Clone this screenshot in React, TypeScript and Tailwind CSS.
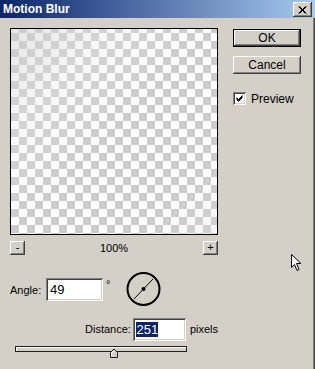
import React from "react";

const raised =
  "shadow-[inset_-1px_-1px_#404040,inset_1px_1px_#ffffff,inset_-2px_-2px_#808080,inset_2px_2px_#d4d0c8]";
const sunken =
  "shadow-[inset_1px_1px_#808080,inset_-1px_-1px_#ffffff,inset_2px_2px_#404040,inset_-2px_-2px_#d4d0c8]";

export default function App() {
  return (
    <div
      className="relative w-[315px] h-[369px] bg-[#d4d0c8] overflow-hidden text-black text-[11px] shadow-[inset_-1px_0_#404040,inset_-2px_0_#808080]"
      style={{ fontFamily: '"Liberation Sans", Arial, sans-serif' }}
    >
      {/* Title bar */}
      <div className="flex items-center justify-between h-[18px] pl-[3px] pr-[3px] bg-[linear-gradient(to_right,#0a246a,#a6caf0)]">
        <span className="text-white font-bold text-[12px] leading-none">Motion Blur</span>
        <div className={`w-[19px] h-[15px] mt-[1px] bg-[#d4d0c8] flex items-center justify-center ${raised}`}>
          <svg width="9" height="8" viewBox="0 0 9 8">
            <path d="M0.5 0.5 L7.5 7.5 M1.5 0.5 L8.5 7.5 M7.5 0.5 L0.5 7.5 M8.5 0.5 L1.5 7.5" stroke="#000" strokeWidth="1" />
          </svg>
        </div>
      </div>

      <div className="flex pl-[10px] pt-[10px]">
        {/* Left column */}
        <div className="w-[208px] flex flex-col">
          <div className="relative h-[207px] border border-black bg-[repeating-conic-gradient(#cccccc_0%_25%,#ffffff_0%_50%)] bg-[length:16px_16px] bg-[position:0px_-4px]">
            <div className="absolute inset-0 bg-[linear-gradient(135deg,rgba(205,205,205,0.5)_0%,rgba(230,230,230,0.3)_25%,rgba(255,255,255,0)_50%,rgba(255,255,255,0)_80%,rgba(220,220,220,0.3)_100%)]" />
          </div>
          <div className="flex items-center justify-between mt-[6px] h-[14px]">
            <div className={`w-[15px] h-[14px] flex items-center justify-center ${raised}`}>
              <span className="leading-none mb-[2px]">-</span>
            </div>
            <span className="leading-none">100%</span>
            <div className={`w-[15px] h-[14px] flex items-center justify-center ${raised}`}>
              <span className="leading-none mb-[1px]">+</span>
            </div>
          </div>

          {/* Angle row */}
          <div className="flex items-center mt-[18px] h-[32px]">
            <span className="text-[11px] w-[36px] mt-[3px]">Angle:</span>
            <div className={`w-[57px] h-[23px] bg-white flex items-center pl-[4px] text-[13px] mt-[1px] ${sunken}`}>49</div>
            <span className="self-start mt-[3px] ml-[3px] text-[11px]">°</span>
            <svg className="ml-[16px]" width="36" height="36" viewBox="0 0 36 36">
              <circle cx="17.5" cy="18" r="16" fill="none" stroke="#000" strokeWidth="2" />
              <line x1="8" y1="28" x2="27" y2="8" stroke="#000" strokeWidth="1" />
              <circle cx="17.5" cy="18" r="2" fill="#000" />
            </svg>
          </div>

          {/* Distance row */}
          <div className="flex items-center mt-[13px] h-[23px]">
            <span className="text-[11px] ml-[75px] w-[52px]">Distance:</span>
            <div className={`w-[56px] h-[23px] bg-white flex items-center pl-[3px] text-[13px] ${sunken}`}>
              <span className="bg-[#0a246a] text-white leading-[15px]">251</span>
            </div>
            <span className="text-[11px] ml-[4px]">pixels</span>
          </div>

          {/* Slider */}
          <div className="relative ml-[5px] mt-[5px] w-[172px] h-[6px] bg-[#d4d0c8] border border-[#202020] shadow-[inset_1px_1px_#ffffff]">
            <svg className="absolute left-[93px] top-[1px]" width="10" height="10" viewBox="0 0 10 10">
              <path d="M1.5 9.5 L1.5 4.5 L5 1 L8.5 4.5 L8.5 9.5 Z" fill="#d4d0c8" stroke="#202020" strokeWidth="1" />
              <path d="M2.5 8.5 L2.5 5 L5 2.5" fill="none" stroke="#ffffff" strokeWidth="1" />
            </svg>
          </div>
        </div>

        {/* Right column */}
        <div className="flex flex-col ml-[15px] mt-[1px]">
          <div className="w-[68px] h-[18px] border border-black">
            <div className={`w-full h-full flex items-center justify-center text-[12px] ${raised}`}>OK</div>
          </div>
          <div className={`w-[68px] h-[18px] mt-[9px] flex items-center justify-center text-[12px] ${raised}`}>Cancel</div>
          <div className="flex items-center mt-[18px] h-[13px]">
            <div className={`w-[13px] h-[13px] bg-white flex items-center justify-center ${sunken}`}>
              <svg width="7" height="7" viewBox="0 0 7 7">
                <path d="M0.5 2.5 L2.5 4.5 L6.5 0.5 M0.5 3.5 L2.5 5.5 L6.5 1.5 M0.5 4.5 L2.5 6.5 L6.5 2.5" stroke="#000" strokeWidth="1" fill="none" />
              </svg>
            </div>
            <span className="ml-[5px] text-[12px] leading-none">Preview</span>
          </div>
        </div>
      </div>

      {/* Mouse cursor */}
      <svg className="absolute left-[291px] top-[254px]" width="12" height="18" viewBox="0 0 12 18">
        <path d="M0.5 0.5 L0.5 13.5 L3.5 10.5 L6 16.5 L8 15.5 L5.5 9.5 L10 9.5 Z" fill="#ffffff" stroke="#000000" strokeWidth="1" />
      </svg>
    </div>
  );
}
